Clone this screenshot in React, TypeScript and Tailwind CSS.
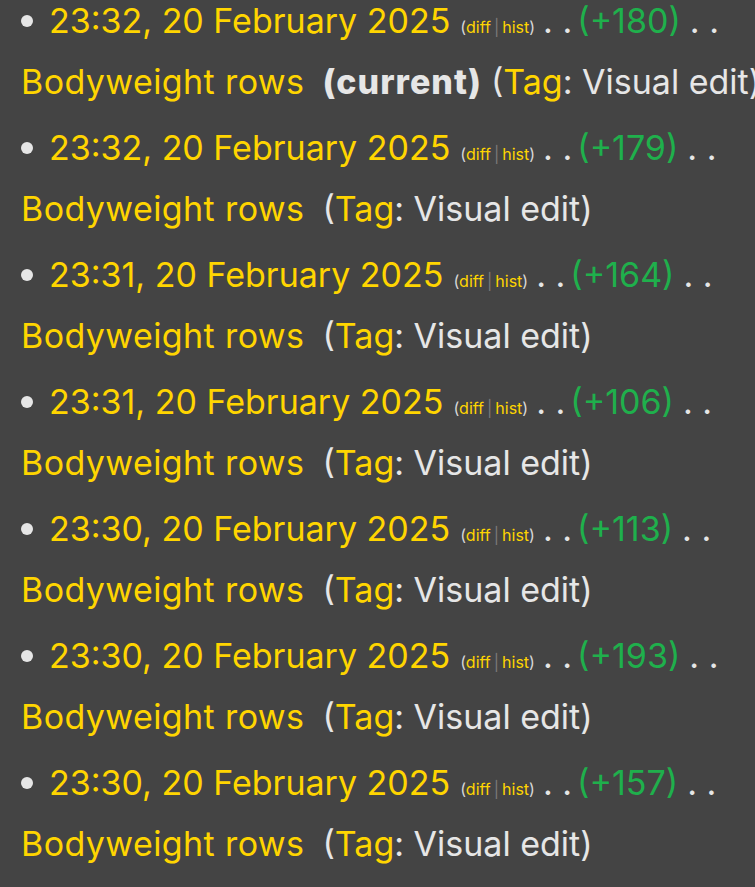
import React from "react";

const entries = [
  { time: "23:32, 20 February 2025", size: "+180", current: true },
  { time: "23:32, 20 February 2025", size: "+179" },
  { time: "23:31, 20 February 2025", size: "+164" },
  { time: "23:31, 20 February 2025", size: "+106" },
  { time: "23:30, 20 February 2025", size: "+113" },
  { time: "23:30, 20 February 2025", size: "+193" },
  { time: "23:30, 20 February 2025", size: "+157" },
];

const Entry = ({ time, size, current }: { time: string; size: string; current?: boolean }) => {
  return (
    <li className="flex flex-col mb-[5px] whitespace-nowrap">
      {/* FIRST LINE */}
      <div className="flex items-baseline h-[61px] pl-[21px]">
        <span className="w-[12px] h-[12px] rounded-full bg-[#e6e6e6] self-center mr-[16px] shrink-0"></span>
        <a className="text-[#ffd500]">{time}</a>
        <span className="text-[16px] ml-[10px] text-[#d8d8d8]">
          (<a className="text-[#ffd500]">diff</a>
          <span className="text-[#7a7a7a] mx-[3px]">|</span>
          <a className="text-[#ffd500]">hist</a>)
        </span>
        <span className="ml-[8px] text-[#e6e6e6]">. .</span>
        <span className="ml-[5px] text-[#1fb04c]">({size})</span>
        <span className="ml-[9px] text-[#e6e6e6]">. .</span>
      </div>
      {/* SECOND LINE */}
      <div className="h-[61px] pl-[21px] flex items-baseline">
        <a className="text-[#ffd500] tracking-[0.4px]">Bodyweight rows</a>
        {current && (
          <b className="ml-[18px] font-extrabold tracking-[1px] text-[#e6e6e6]">(current)</b>
        )}
        <span className={current ? "ml-[9px] text-[#e6e6e6]" : "ml-[18px] text-[#e6e6e6]"}>
          (<a className="text-[#ffd500]">Tag</a>: Visual edit)
        </span>
      </div>
    </li>
  );
};

const App = () => {
  return (
    <div
      className="w-full h-[887px] bg-[#444444] overflow-hidden text-[34px] leading-[61px]"
      style={{ fontFamily: "Inter, 'Noto Sans', sans-serif" }}
    >
      <ul className="-mt-[10px]">
        {entries.map((e, i) => (
          <Entry key={i} {...e} />
        ))}
      </ul>
    </div>
  );
};

export default App;
